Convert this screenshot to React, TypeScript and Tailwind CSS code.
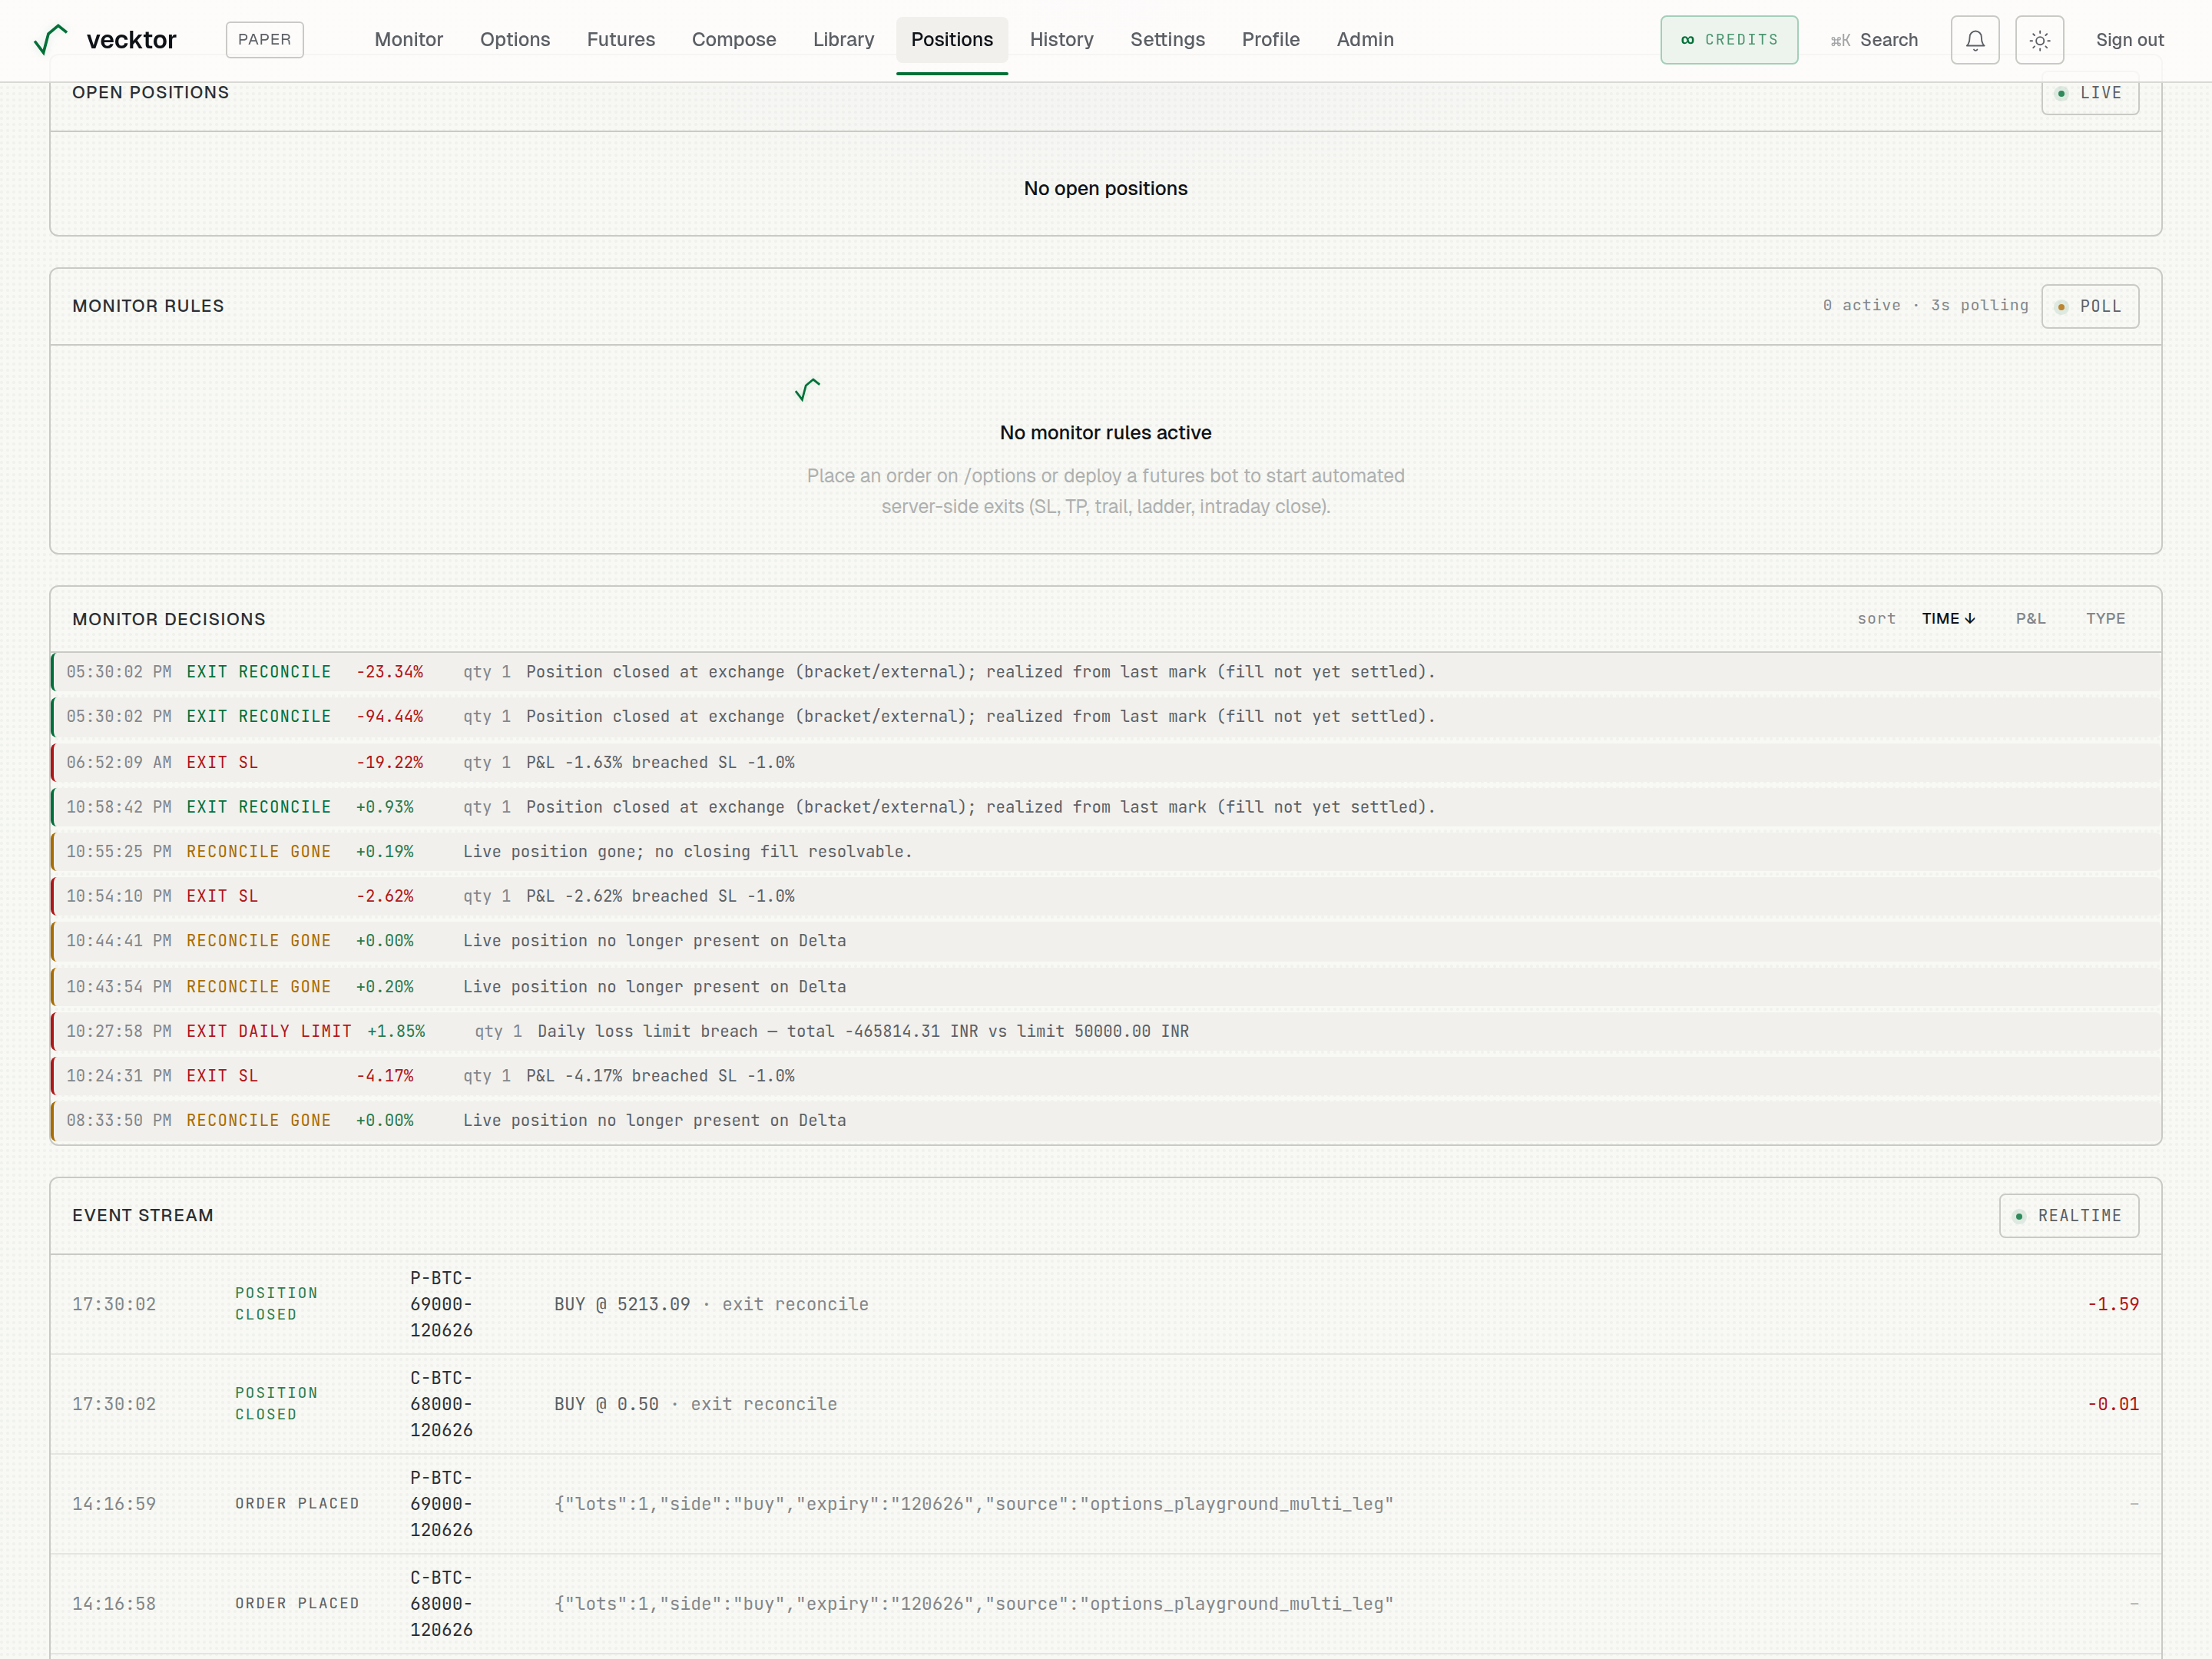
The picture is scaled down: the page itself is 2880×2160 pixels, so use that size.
import type { ReactNode } from 'react';
import { Sun } from 'lucide-react';
import clsx from 'clsx';

type Tone = 'green' | 'red' | 'amber';

const NAV = ['Monitor', 'Options', 'Futures', 'Compose', 'Library', 'Positions', 'History', 'Settings', 'Profile', 'Admin'];

const CLOSED_NOTE = 'Position closed at exchange (bracket/external); realized from last mark (fill not yet settled).';
const GONE_NOTE = 'Live position no longer present on Delta';

const DECISIONS: { time: string; type: string; tone: Tone; pnl: string; qty?: string; note: string; tall?: boolean }[] = [
  { time: '05:30:02 PM', type: 'EXIT RECONCILE', tone: 'green', pnl: '-23.34%', qty: 'qty 1', note: CLOSED_NOTE },
  { time: '05:30:02 PM', type: 'EXIT RECONCILE', tone: 'green', pnl: '-94.44%', qty: 'qty 1', note: CLOSED_NOTE, tall: true },
  { time: '06:52:09 AM', type: 'EXIT SL', tone: 'red', pnl: '-19.22%', qty: 'qty 1', note: 'P&L -1.63% breached SL -1.0%' },
  { time: '10:58:42 PM', type: 'EXIT RECONCILE', tone: 'green', pnl: '+0.93%', qty: 'qty 1', note: CLOSED_NOTE },
  { time: '10:55:25 PM', type: 'RECONCILE GONE', tone: 'amber', pnl: '+0.19%', note: 'Live position gone; no closing fill resolvable.' },
  { time: '10:54:10 PM', type: 'EXIT SL', tone: 'red', pnl: '-2.62%', qty: 'qty 1', note: 'P&L -2.62% breached SL -1.0%' },
  { time: '10:44:41 PM', type: 'RECONCILE GONE', tone: 'amber', pnl: '+0.00%', note: GONE_NOTE, tall: true },
  { time: '10:43:54 PM', type: 'RECONCILE GONE', tone: 'amber', pnl: '+0.20%', note: GONE_NOTE },
  { time: '10:27:58 PM', type: 'EXIT DAILY LIMIT', tone: 'red', pnl: '+1.85%', qty: 'qty 1', note: 'Daily loss limit breach — total -465814.31 INR vs limit 50000.00 INR' },
  { time: '10:24:31 PM', type: 'EXIT SL', tone: 'red', pnl: '-4.17%', qty: 'qty 1', note: 'P&L -4.17% breached SL -1.0%' },
  { time: '08:33:50 PM', type: 'RECONCILE GONE', tone: 'amber', pnl: '+0.00%', note: GONE_NOTE, tall: true },
];

const ORDER_META = '{"lots":1,"side":"buy","expiry":"120626","source":"options_playground_multi_leg"';

const EVENTS: { time: string; kind: string[]; closed?: boolean; symbol: string[]; fill?: string; detail: string; pnl?: string }[] = [
  { time: '17:30:02', kind: ['POSITION', 'CLOSED'], closed: true, symbol: ['P-BTC-', '69000-', '120626'], fill: 'BUY @ 5213.09', detail: ' · exit reconcile', pnl: '-1.59' },
  { time: '17:30:02', kind: ['POSITION', 'CLOSED'], closed: true, symbol: ['C-BTC-', '68000-', '120626'], fill: 'BUY @ 0.50', detail: ' · exit reconcile', pnl: '-0.01' },
  { time: '14:16:59', kind: ['ORDER PLACED'], symbol: ['P-BTC-', '69000-', '120626'], detail: ORDER_META },
  { time: '14:16:58', kind: ['ORDER PLACED'], symbol: ['C-BTC-', '68000-', '120626'], detail: ORDER_META },
];

const toneText: Record<Tone, string> = {
  green: 'text-[#00703a]',
  red: 'text-[#b01518]',
  amber: 'text-[#a86c00]',
};

const toneBorder: Record<Tone, string> = {
  green: 'border-l-[#00703a]',
  red: 'border-l-[#b01518]',
  amber: 'border-l-[#a86c00]',
};

const Mark = ({ className }: { className?: string }) => (
  <svg className={className} viewBox="0 0 48 48" fill="none" stroke="#007038" strokeWidth="3.7" strokeLinejoin="miter">
    <path d="M5.2 25.5 16.6 40.5 23 16 35.8 5.4 47 14.4" />
  </svg>
);

const BellIcon = () => (
  <svg width="30.4" height="30.4" viewBox="0 0 24 24" fill="none" stroke="currentColor" strokeWidth="1.5" strokeLinecap="round" strokeLinejoin="round">
    <path d="M6 8a6 6 0 0 1 12 0c0 7 3 9 3 9H3s3-2 3-9" />
    <path d="M10.3 21a1.94 1.94 0 0 0 3.4 0" />
  </svg>
);

const Badge = ({ label, amber }: { label: string; amber?: boolean }) => (
  <span className="flex h-[58px] items-center rounded-lg border-2 border-[#c9cac5] pr-[20.5px] pl-5 font-['JetBrains_Mono','DejaVu_Sans_Mono',monospace] text-[20.8px] tracking-[1.25px] text-[#5c6065]">
    <span
      className={clsx(
        'mr-[20.3px] mt-0.5 size-2 rounded-full ring-6 ring-[#007038]/10',
        amber ? 'bg-[#bb862f]' : 'bg-[#2f8a5a]'
      )}
    />
    {label}
  </span>
);

const Card = ({ title, right, short, children }: { title: string; right?: ReactNode; short?: boolean; children: ReactNode }) => (
  <section className="rounded-xl border-2 border-[#c9cac5]">
    <div className={clsx('box-content flex items-center justify-between border-b-2 border-[#c9cac5] px-7', short ? 'h-[84px]' : 'h-[98px]')}>
      <h2 className={clsx('text-[22.4px] font-medium tracking-[1.64px] text-[#2b2f34]', short && 'pt-0.5')}>{title}</h2>
      {right}
    </div>
    {children}
  </section>
);

function Header() {
  return (
    <header className="fixed inset-x-0 top-0 z-10 flex h-[108px] items-start border-b-2 border-[#c9cac5]/70 bg-[#fefdfb]/85 pl-10 pr-[61.6px] pt-5 text-[#5c6065]">
      <div className="flex h-16 items-center">
        <Mark className="size-12 drop-shadow-[0_0_6px_rgba(0,112,56,0.15)]" />
        <span className="ml-[24.4px] text-[32px] font-semibold text-[#0f1318]">vecktor</span>
        <span className="ml-[63.2px] flex h-12 w-[102px] items-center justify-center rounded-md border-2 border-[#c9cac5] pb-[3px] text-[20.8px] tracking-[1.08px]">
          PAPER
        </span>
      </div>

      <nav className="ml-[72.4px] flex gap-[8.9px] pt-0.5">
        {NAV.map(item => (
          <a
            key={item}
            className={clsx(
              'relative flex h-[60px] items-center rounded-lg px-[19.2px] text-[24.96px] font-medium',
              item === 'Positions' && 'bg-[#f1f0ed] text-[#0f1318]'
            )}
          >
            {item}
            {item === 'Positions' && <span className="absolute inset-x-0 top-[72px] h-1 rounded-sm bg-[#007038]" />}
          </a>
        ))}
      </nav>

      <div className="ml-auto flex h-16 items-center text-[23.04px] font-medium">
        <button type="button" className="flex h-16 w-[180px] items-center rounded-lg border-2 border-[#a3cfb7] bg-[#edf4ee] pl-[24.3px] font-['JetBrains_Mono','DejaVu_Sans_Mono',monospace] text-[19.84px] font-normal tracking-[1.9px] text-[#4b9670]">
          <span className="mr-[13.7px] text-[29px] font-bold tracking-normal text-[#007038]">∞</span>
          CREDITS
        </button>
        <button type="button" className="ml-[41.7px] flex items-center">
          <span className="mr-3 font-['JetBrains_Mono','DejaVu_Sans_Mono',monospace] text-[21.6px] font-normal text-[#a3a5a7]">⌘K</span>
          Search
        </button>
        <button type="button" aria-label="Notifications" className="ml-[41.6px] flex size-16 items-center justify-center rounded-lg border-2 border-[#c9cac5] pt-0.5">
          <BellIcon />
        </button>
        <button type="button" aria-label="Theme" className="ml-5 flex size-16 items-center justify-center rounded-lg border-2 border-[#c9cac5] pt-0.5">
          <Sun size={30.4} strokeWidth={1.5} />
        </button>
        <button type="button" className="ml-[41.4px]">Sign out</button>
      </div>
    </header>
  );
}

export default function App() {
  return (
    <div className="h-[2160px] overflow-hidden bg-[#f8f9f4] bg-[radial-gradient(circle_at_2px_2px,rgba(15,19,24,0.03)_2px,transparent_2.2px)] bg-size-[8px_8px] font-['Geist','Inter',sans-serif]">
      <Header />
      <main className="flex flex-col gap-10 bg-[radial-gradient(900px_320px_at_1440px_0px,rgba(232,228,240,0.35),transparent)] px-16 pt-[70px]">
        <Card title="OPEN POSITIONS" right={<Badge label="LIVE" />}>
          <div className="flex h-[134px] items-center justify-center pt-3 text-[25.45px] font-medium text-[#0f1318]">No open positions</div>
        </Card>

        <Card
          title="MONITOR RULES"
          right={
            <div className="flex items-center gap-4 font-['JetBrains_Mono','DejaVu_Sans_Mono',monospace] text-xl tracking-[0.8px] text-[#83868a]">
              <span className="pb-1">0 active · 3s polling</span>
              <Badge label="POLL" amber />
            </div>
          }
        >
          <div className="mx-auto flex h-[270px] w-[820px] flex-col items-center pt-10">
            <Mark className="ml-[2.4px] size-9 self-start drop-shadow-[0_0_4px_rgba(0,112,56,0.15)]" />
            <p className="mt-4 text-[25.45px] leading-[42px] font-medium text-[#0f1318]">No monitor rules active</p>
            <p className="mt-[14.7px] text-center text-[24.72px] leading-[40.3px] text-[#aeb0b0]">
              Place an order on /options or deploy a futures bot to start automated
              <br />
              server-side exits (SL, TP, trail, ladder, intraday close).
            </p>
          </div>
        </Card>

        <Card
          title="MONITOR DECISIONS"
          short
          right={
            <div className="flex items-center pb-0.5 text-xl font-medium tracking-[0.8px] text-[#83868a]">
              <span className="mr-[33.6px] font-['JetBrains_Mono','DejaVu_Sans_Mono',monospace] font-normal">sort</span>
              <span className="mr-[52px] text-[#0f1318]">TIME ↓</span>
              <span className="mr-[52px]">P&amp;L</span>
              <span className="mr-[18px]">TYPE</span>
            </div>
          }
        >
          <ul className="flex flex-col gap-2 pb-1 font-['JetBrains_Mono','DejaVu_Sans_Mono',monospace] text-[20.8px] text-[#5c6065]">
            {DECISIONS.map((d, i) => (
              <li
                key={i}
                className={clsx('flex gap-[19.2px] rounded-lg border-l-4 bg-[#f1f0ed] pl-[16.4px] leading-[50px]', toneBorder[d.tone], d.tall ? 'h-[52px]' : 'h-[50px]')}
              >
                <span className="text-[#83868a]">{d.time}</span>
                <span className={clsx('min-w-[201.4px] tracking-[1.04px]', toneText[d.tone])}>{d.type}</span>
                <span className={clsx('w-[120.4px]', d.pnl.startsWith('-') ? 'text-[#b01518]' : 'text-[#2a7a4c]')}>{d.pnl}</span>
                {d.qty && <span className="mr-[0.6px] text-[#83868a]">{d.qty}</span>}
                <span>{d.note}</span>
              </li>
            ))}
          </ul>
        </Card>

        <Card title="EVENT STREAM" right={<Badge label="REALTIME" />}>
          <ul className="pb-10 font-['JetBrains_Mono','DejaVu_Sans_Mono',monospace] text-[22.8px] leading-[34px] text-[#83868a]">
            {EVENTS.map((e, i) => (
              <li key={i} className="box-content grid h-32 grid-cols-[212px_228px_187.4px_1fr_auto] items-center border-b-2 border-[#e4e5e1] px-7">
                <span>{e.time}</span>
                <span className={clsx('pb-0.5 text-[19.84px] leading-7 tracking-[1.7px]', e.closed ? 'text-[#2f7d50]' : 'text-[#5c6065]')}>
                  {e.kind.map(line => <span key={line} className="block">{line}</span>)}
                </span>
                <span className="text-[#2b2f34]">
                  {e.symbol.map(line => <span key={line} className="block">{line}</span>)}
                </span>
                <span>
                  {e.fill && <span className="text-[#5c6065]">{e.fill}</span>}
                  {e.detail}
                </span>
                {e.pnl ? <span className="text-[#b01518]">{e.pnl}</span> : <span className="text-[#aeb0b0]">–</span>}
              </li>
            ))}
          </ul>
        </Card>
      </main>
    </div>
  );
}
